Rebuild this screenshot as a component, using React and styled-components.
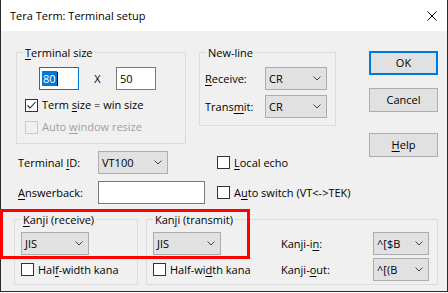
import React from "react";
import styled, { createGlobalStyle } from "styled-components";

const Global = createGlobalStyle`
  html, body { margin: 0; padding: 0; background: #ffffff; }
  body {
    font-family: "Open Sans", "Noto Sans", "Liberation Sans", sans-serif;
    font-size: 11px;
    color: #000;
  }
  * { box-sizing: border-box; }
`;

const Window = styled.div`
  position: relative;
  width: 448px;
  height: 292px;
  display: flex;
  flex-direction: column;
  background: #f0f0f0;
  border: 1px solid #2b2b2b;
  border-top: none;
  font-size: 11px;
  line-height: 16px;
`;

const TitleBar = styled.div`
  height: 31px;
  flex: none;
  display: flex;
  align-items: center;
  justify-content: space-between;
  padding: 0 10px 0 9px;
  background: #ffffff;
`;

const Title = styled.span`
  font-size: 11px;
`;

const Content = styled.div`
  flex: 1;
  display: flex;
  flex-direction: column;
  padding: 20px 9px 0 13px;
`;

const TopRow = styled.div`
  display: flex;
  align-items: flex-start;
`;

const LeftCol = styled.div`
  flex: 1;
  display: flex;
  flex-direction: column;
`;

const GroupsRow = styled.div`
  display: flex;
  align-items: flex-start;
  gap: 13px;
  margin: 1px 0 0 2px;
`;

const Group = styled.div`
  display: flex;
  flex-direction: column;
  border: 1px solid #dcdcdc;
  width: ${(p) => (p.$w ? `${p.$w}px` : "auto")};
  flex: ${(p) => (p.$w ? "none" : "1")};
  height: ${(p) => p.$h}px;
`;

const Legend = styled.div`
  align-self: flex-start;
  margin: -8px 0 0 6px;
  padding: 0 2px;
  height: 16px;
  line-height: 16px;
  background: #f0f0f0;
`;

const Acc = styled.span`
  text-decoration: underline;
  text-underline-offset: 2px;
  text-decoration-thickness: 1px;
`;

const SizeRow = styled.div`
  display: flex;
  align-items: center;
  margin: 6px 0 0 22px;
`;

const TextBox = styled.div`
  display: flex;
  align-items: center;
  width: ${(p) => p.$w}px;
  height: 23px;
  padding-left: ${(p) => (p.$focused ? 2 : 3)}px;
  background: #ffffff;
  border: 1px solid ${(p) => (p.$focused ? "#0078d7" : "#7a7a7a")};
`;

const Selected = styled.span`
  background: #0078d7;
  color: #ffffff;
  line-height: 15px;
  padding: 0 1px;
`;

const Caret = styled.span`
  width: 1px;
  height: 14px;
  background: #000;
`;

const Sep = styled.span`
  width: 37px;
  text-align: center;
`;

const CheckRow = styled.div`
  display: flex;
  align-items: center;
  height: 16px;
  margin: ${(p) => p.$mt || 0}px 0 0 ${(p) => p.$ml || 0}px;
  color: ${(p) => (p.$disabled ? "#a0a0a0" : "#000")};
  white-space: nowrap;
`;

const Box = styled.span`
  flex: none;
  width: 13px;
  height: 13px;
  margin-right: 4px;
  display: flex;
  align-items: center;
  justify-content: center;
  background: ${(p) => (p.$disabled ? "transparent" : "#ffffff")};
  border: 1px solid ${(p) => (p.$disabled ? "#cccccc" : "#333333")};
`;

const NLGrid = styled.div`
  display: grid;
  grid-template-columns: 60px 62px;
  grid-auto-rows: 23px;
  row-gap: 5px;
  align-items: center;
  margin: 6px 0 0 5px;
`;

const FieldGrid = styled.div`
  display: grid;
  grid-template-columns: 80px 119px auto;
  grid-auto-rows: 23px;
  row-gap: 7px;
  align-items: center;
  margin-top: 7px;
  padding-left: 4px;
`;

const Combo = styled.div`
  display: flex;
  align-items: center;
  justify-content: space-between;
  width: ${(p) => p.$w}px;
  height: 23px;
  padding: 0 5px 0 3px;
  background: #e1e1e1;
  border: 1px solid #adadad;
  white-space: nowrap;
`;

const ButtonCol = styled.div`
  flex: none;
  width: 69px;
  display: flex;
  flex-direction: column;
`;

const Button = styled.div`
  display: flex;
  align-items: center;
  justify-content: center;
  height: 24px;
  margin-top: ${(p) => p.$mt || 0}px;
  background: #e1e1e1;
  border: ${(p) => (p.$default ? "2px solid #0078d7" : "1px solid #adadad")};
`;

const KanjiRow = styled.div`
  display: flex;
  gap: 8px;
  margin-top: 15px;
`;

const KanjiGrid = styled.div`
  display: grid;
  grid-template-columns: ${(p) => p.$cols};
  grid-template-rows: 23px 23px;
  row-gap: 3px;
  align-items: center;
  margin: 4px 0 0 6px;
`;

const Label = styled.span`
  white-space: nowrap;
`;

const Highlight = styled.div`
  position: absolute;
  left: -1px;
  top: 209px;
  width: 250px;
  height: 50px;
  border: 3px solid #ff0000;
  pointer-events: none;
`;

const Chevron = () => (
  <svg width="8" height="5" viewBox="0 0 8 5">
    <polyline points="0.5,0.5 4,4 7.5,0.5" fill="none" stroke="#444" strokeWidth="1" />
  </svg>
);

const CloseIcon = () => (
  <svg width="10" height="10" viewBox="0 0 10 10">
    <path d="M0.5 0.5 L9.5 9.5 M9.5 0.5 L0.5 9.5" stroke="#000" strokeWidth="1" />
  </svg>
);

const Check = ({ checked, disabled, children, mt, ml }) => (
  <CheckRow $mt={mt} $ml={ml} $disabled={disabled}>
    <Box $disabled={disabled}>
      {checked && (
        <svg width="11" height="11" viewBox="0 0 11 11">
          <polyline points="1.5,5.5 4,8 9.5,2" fill="none" stroke="#222" strokeWidth="1.1" />
        </svg>
      )}
    </Box>
    <span>{children}</span>
  </CheckRow>
);

const Select = ({ w, value }) => (
  <Combo $w={w}>
    <span>{value}</span>
    <Chevron />
  </Combo>
);

export default function App() {
  return (
    <>
      <Global />
      <Window>
        <TitleBar>
          <Title>Tera Term: Terminal setup</Title>
          <CloseIcon />
        </TitleBar>
        <Content>
          <TopRow>
            <LeftCol>
              <GroupsRow>
                <Group $w={170} $h={92}>
                  <Legend>
                    <Acc>T</Acc>erminal size
                  </Legend>
                  <SizeRow>
                    <TextBox $w={40} $focused>
                      <Selected>80</Selected>
                      <Caret />
                    </TextBox>
                    <Sep>X</Sep>
                    <TextBox $w={40}>50</TextBox>
                  </SizeRow>
                  <Check checked mt={7} ml={8}>
                    Term <Acc>s</Acc>ize = win size
                  </Check>
                  <Check disabled mt={6} ml={8}>
                    Auto <Acc>w</Acc>indow resize
                  </Check>
                </Group>
                <Group $w={137} $h={74}>
                  <Legend>New-line</Legend>
                  <NLGrid>
                    <Label>
                      <Acc>R</Acc>eceive:
                    </Label>
                    <Select w={62} value="CR" />
                    <Label>
                      Trans<Acc>m</Acc>it:
                    </Label>
                    <Select w={62} value="CR" />
                  </NLGrid>
                </Group>
              </GroupsRow>
              <FieldGrid>
                <Label>
                  Terminal <Acc>I</Acc>D:
                </Label>
                <Select w={70} value="VT100" />
                <Check>
                  <Acc>L</Acc>ocal echo
                </Check>
                <Label>
                  <Acc>A</Acc>nswerback:
                </Label>
                <TextBox $w={107} />
                <Check>
                  A<Acc>u</Acc>to switch (VT&lt;-&gt;TEK)
                </Check>
              </FieldGrid>
            </LeftCol>
            <ButtonCol>
              <Button $default>OK</Button>
              <Button $mt={13}>Cancel</Button>
              <Button $mt={21}>
                <span>
                  <Acc>H</Acc>elp
                </span>
              </Button>
            </ButtonCol>
          </TopRow>
          <KanjiRow>
            <Group $w={124} $h={66}>
              <Legend>
                <Acc>K</Acc>anji (receive)
              </Legend>
              <KanjiGrid $cols="68px">
                <Select w={68} value="JIS" />
                <Check>
                  Hal<Acc>f</Acc>-width kana
                </Check>
              </KanjiGrid>
            </Group>
            <Group $h={66}>
              <Legend>
                Kan<Acc>j</Acc>i (transmit)
              </Legend>
              <KanjiGrid $cols="128px 92px 56px">
                <Select w={68} value="JIS" />
                <Label>
                  Kanji-i<Acc>n</Acc>:
                </Label>
                <Select w={56} value="^[$B" />
                <Check>
                  Half-wi<Acc>d</Acc>th kana
                </Check>
                <Label>
                  Kanji-<Acc>o</Acc>ut:
                </Label>
                <Select w={56} value="^[(B" />
              </KanjiGrid>
            </Group>
          </KanjiRow>
        </Content>
        <Highlight />
      </Window>
    </>
  );
}
